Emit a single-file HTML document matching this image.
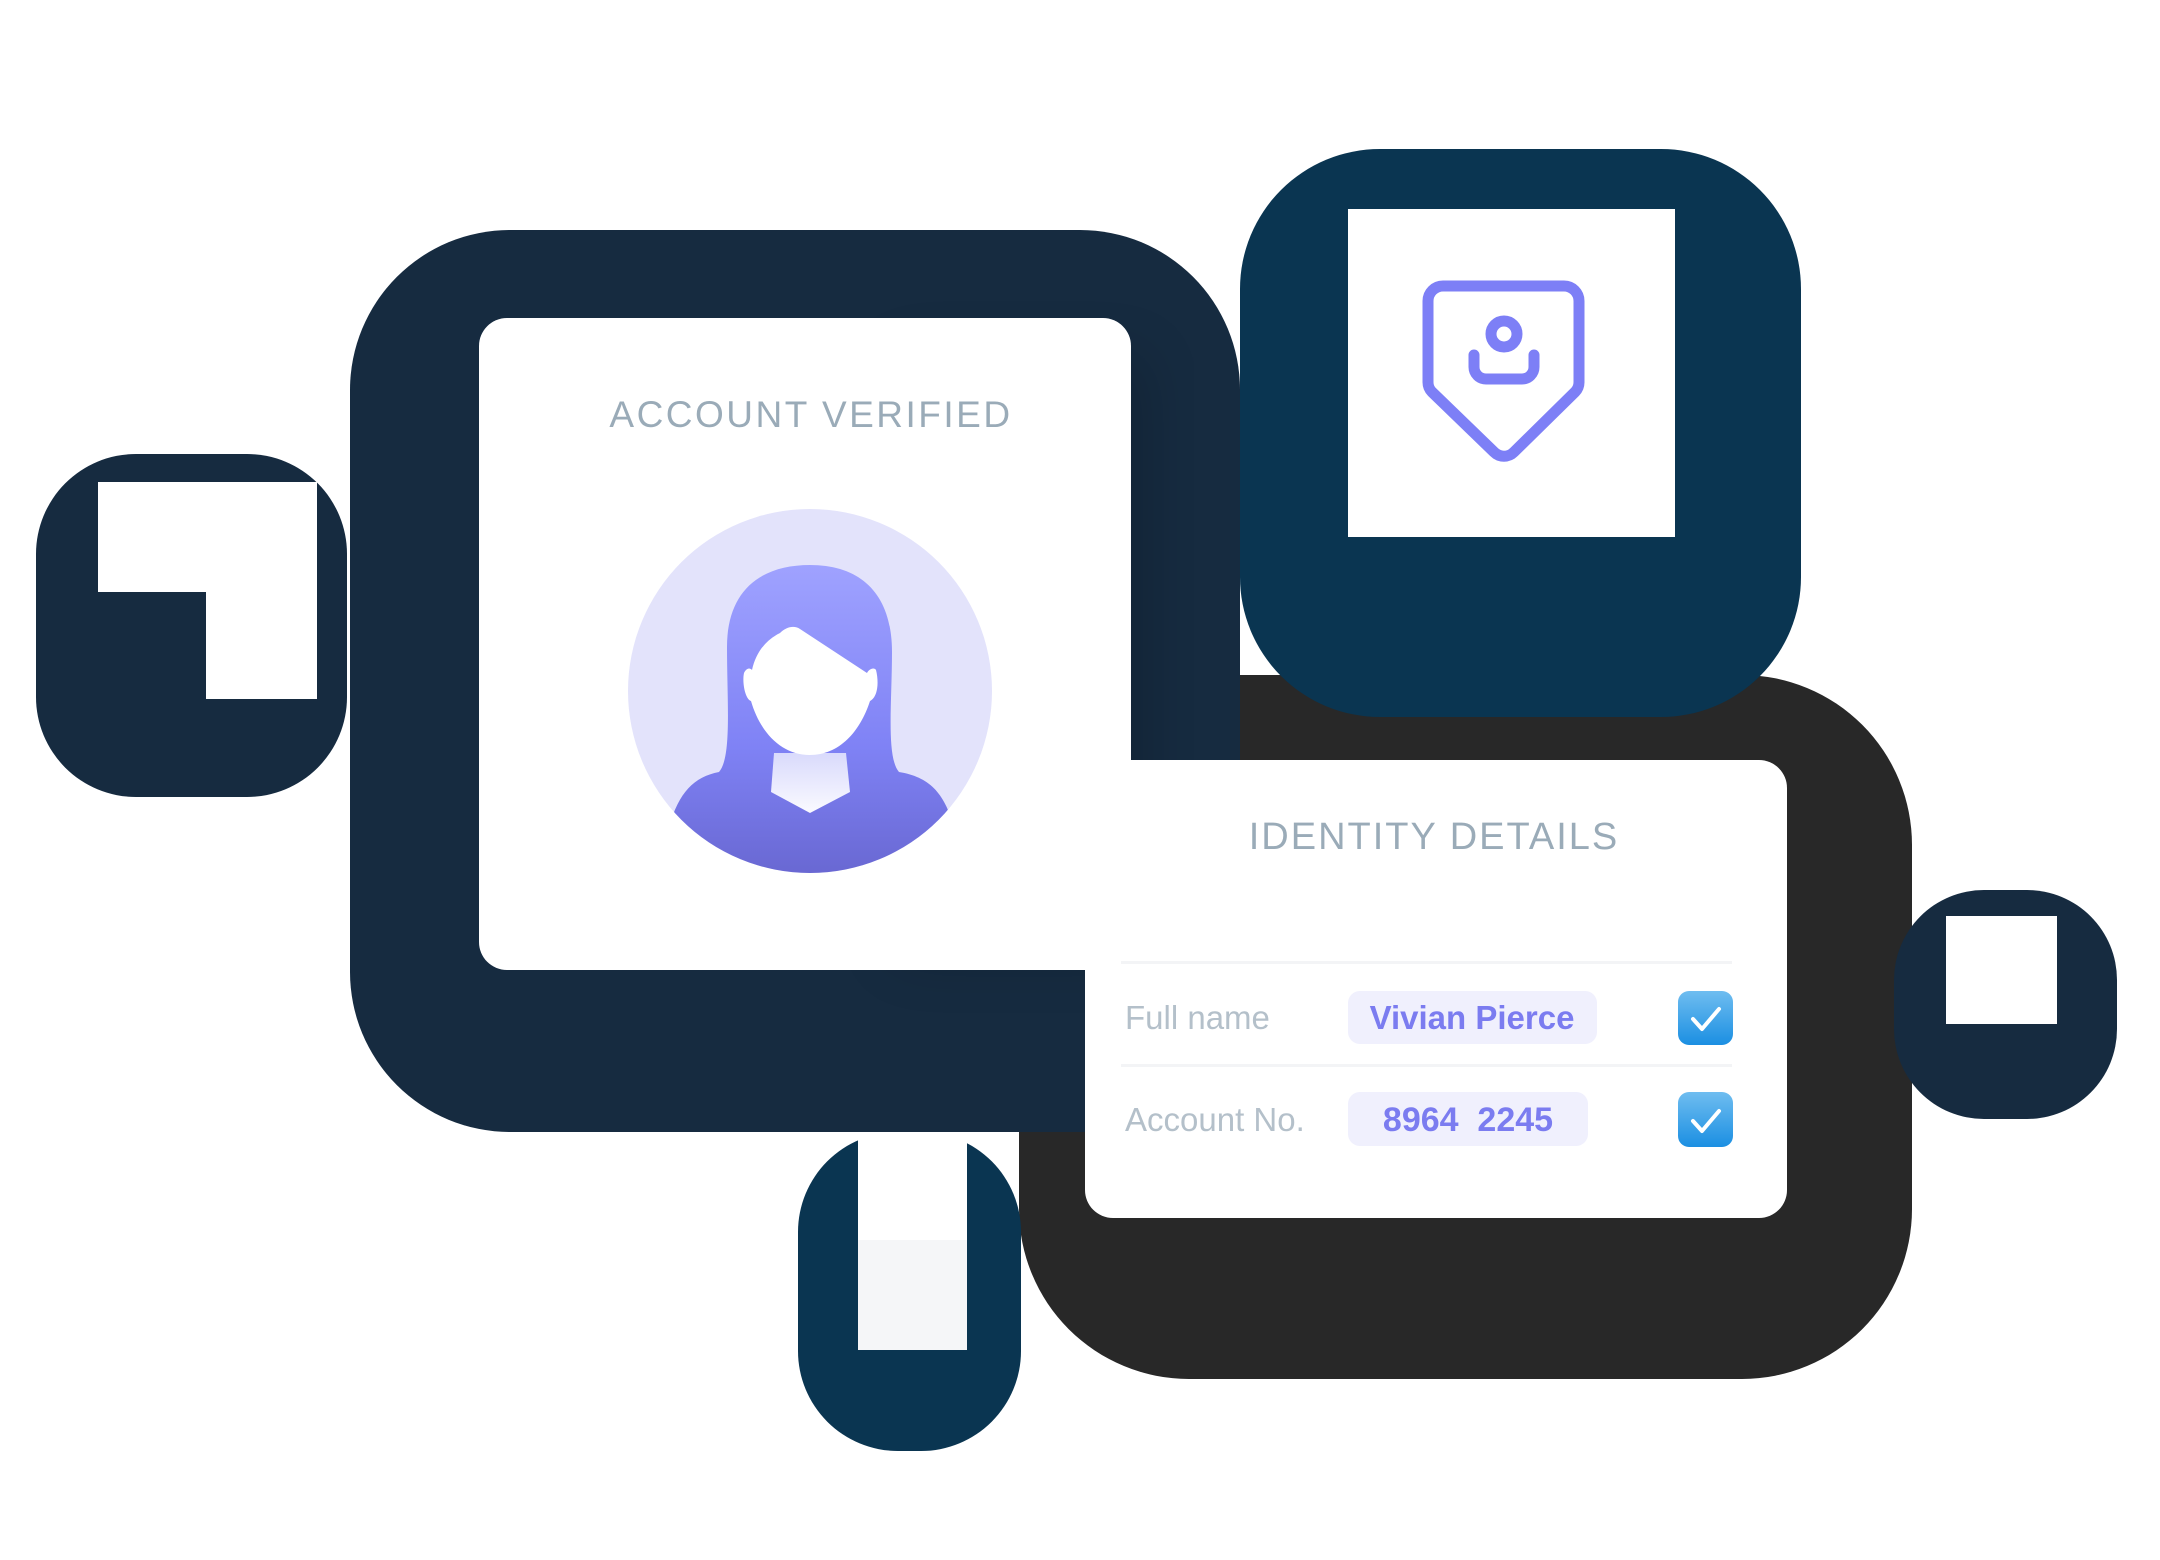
<!DOCTYPE html>
<html><head><meta charset="utf-8"><style>
html,body{margin:0;padding:0;background:#fff;width:2160px;height:1560px;overflow:hidden}
svg{display:block}
text{font-family:"Liberation Sans",sans-serif}
</style></head><body>
<svg width="2160" height="1560" viewBox="0 0 2160 1560" xmlns="http://www.w3.org/2000/svg">
<defs>
<linearGradient id="pg" x1="0" y1="0" x2="0" y2="1">
<stop offset="0" stop-color="#9fa2ff"/><stop offset="0.55" stop-color="#7f82f5"/><stop offset="1" stop-color="#6563cc"/>
</linearGradient>
<linearGradient id="ng" x1="0" y1="0" x2="0" y2="1"><stop offset="0" stop-color="#d9dafc"/><stop offset="1" stop-color="#fafaff"/></linearGradient>
<linearGradient id="cb" x1="0" y1="0" x2="0" y2="1"><stop offset="0" stop-color="#6fbdf0"/><stop offset="1" stop-color="#1b8fe2"/></linearGradient>
<clipPath id="cc"><circle cx="816" cy="694" r="182"/></clipPath>
<filter id="sh" x="-20%" y="-20%" width="140%" height="140%"><feGaussianBlur stdDeviation="30"/></filter>
</defs>
<g transform="translate(-6,-3)">
<rect x="1025" y="678" width="893" height="704" rx="170" fill="#282828"/>
<rect x="42" y="457" width="311" height="343" rx="100" fill="#162b40"/>
<rect x="356" y="233" width="890" height="902" rx="160" fill="#162b40"/>
<rect x="804" y="1135" width="223" height="319" rx="100" fill="#0a3551"/>
<rect x="864" y="1135" width="109" height="218" fill="#fff"/>
<rect x="864" y="1243" width="109" height="110" fill="#f5f6f8"/>
<rect x="1246" y="152" width="561" height="568" rx="140" fill="#0a3551"/>
<rect x="1354" y="212" width="327" height="328" fill="#fff"/>
<rect x="1900" y="893" width="223" height="229" rx="90" fill="#162b40"/>
<rect x="1952" y="919" width="111" height="108" fill="#fff"/>
<path d="M104 485H323V702H212V595H104Z" fill="#fff"/>
<g fill="none" stroke="#7d7ff6" stroke-width="11" stroke-linecap="round" stroke-linejoin="round">
<path d="M1449 289H1570a15 15 0 0 1 15 15V385a14 14 0 0 1-4 10L1520 455a14 14 0 0 1-20 0L1438 395a14 14 0 0 1-4-10V304a15 15 0 0 1 15-15Z"/>
<circle cx="1510" cy="337" r="13"/>
<path d="M1480 358V370a12 12 0 0 0 12 12H1528a12 12 0 0 0 12-12V358"/>
</g>
<rect x="900" y="360" width="250" height="600" fill="#000" opacity="0.18" filter="url(#sh)"/>
<rect x="485" y="321" width="652" height="652" rx="28" fill="#fff"/>
<text x="817" y="430" text-anchor="middle" font-size="37" fill="#9aabb8" letter-spacing="2.5">ACCOUNT VERIFIED</text>
<circle cx="816" cy="694" r="182" fill="#e3e3fb"/>
<g clip-path="url(#cc)">
<path d="M733 650C733 595 765 568 816 568C868 568 898 598 898 655C898 705 892 760 905 775C935 780 950 795 960 830L960 900H670L675 830C685 795 700 780 725 775C738 760 733 705 733 650Z" fill="url(#pg)"/>
<path d="M780 756L777 795L816 816L856 795L852 756Z" fill="url(#ng)"/>
<path d="M786 636C792 630 800 628 806 632L873 676C875 672 880 670 882 673C885 685 884 700 876 704C866 735 845 758 816 758C787 758 766 735 757 704C751 702 748 685 750 676C752 672 755 670 758 673C762 655 772 643 786 636Z" fill="#fff"/>
</g>
<rect x="1091" y="763" width="702" height="458" rx="28" fill="#fff"/>
<text x="1440" y="852" text-anchor="middle" font-size="38" fill="#9aabb8" letter-spacing="2">IDENTITY DETAILS</text>
<rect x="1127" y="964" width="611" height="3" fill="#f3f4f6"/>
<rect x="1127" y="1067" width="611" height="3" fill="#f3f4f6"/>
<text x="1131" y="1032" font-size="33" fill="#b4c0ca">Full name</text>
<rect x="1354" y="994" width="249" height="53" rx="12" fill="#f0f0fd"/>
<text x="1478" y="1032" text-anchor="middle" font-size="33" font-weight="bold" fill="#7b7cf0">Vivian Pierce</text>
<rect x="1684" y="994" width="55" height="54" rx="11" fill="url(#cb)"/>
<path d="M1699 1022L1708 1032L1725 1012" fill="none" stroke="#fff" stroke-width="4" stroke-linecap="round" stroke-linejoin="round"/>
<text x="1131" y="1134" font-size="33" fill="#b4c0ca">Account No.</text>
<rect x="1354" y="1095" width="240" height="54" rx="12" fill="#f0f0fd"/>
<text x="1474" y="1134" text-anchor="middle" font-size="34" font-weight="bold" fill="#7b7cf0" xml:space="preserve">8964  2245</text>
<rect x="1684" y="1095" width="55" height="55" rx="11" fill="url(#cb)"/>
<path d="M1699 1124L1708 1134L1725 1114" fill="none" stroke="#fff" stroke-width="4" stroke-linecap="round" stroke-linejoin="round"/>
</g>
</svg>
</body></html>
